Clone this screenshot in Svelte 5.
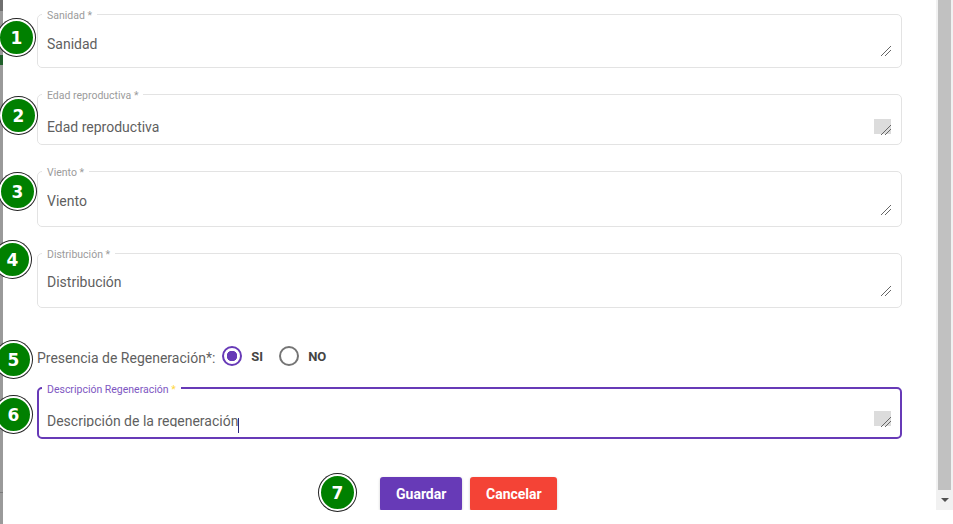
<script>
	// top = space above the textarea, height = textarea height, below = space under it
	const fieldsTop = [
		{ label: "Sanidad", value: "Sanidad", top: 12, height: 22, below: 0 },
		{ label: "Edad reproductiva", value: "Edad reproductiva", top: 15, height: 18, below: -2, corner: true },
		{ label: "Viento", value: "Viento", top: 12, height: 24, below: 0 },
		{ label: "Distribución", value: "Distribución", top: 11, height: 24, below: 0 }
	];

	const steps = [
		{ n: 1, left: -5, top: 19 },
		{ n: 2, left: -3, top: 97 },
		{ n: 3, left: -4, top: 173 },
		{ n: 4, left: -9, top: 241 },
		{ n: 5, left: -8, top: 341 },
		{ n: 6, left: -8, top: 396 },
		{ n: 7, left: 316, top: 474 }
	];

	let presencia = $state("si");
	let descripcion = $state("Descripción de la regeneración");
</script>

<div class="page">
	<div class="strip"></div>

	<main class="form">
		<div class="fields">
			{#each fieldsTop as f}
				<fieldset class="field">
					<legend>{f.label} *</legend>
					<textarea
						class:corner={f.corner}
						style:margin-top="{f.top}px"
						style:margin-bottom="{f.below}px"
						style:height="{f.height}px"
						value={f.value}
					></textarea>
				</fieldset>
			{/each}
		</div>

		<div class="radio-row">
			<span class="radio-title">Presencia de Regeneración*:</span>
			<label class="radio"><input type="radio" name="reg" value="si" bind:group={presencia} /> SI</label>
			<label class="radio"><input type="radio" name="reg" value="no" bind:group={presencia} /> NO</label>
		</div>

		<fieldset class="field active">
			<legend>Descripción Regeneración <span class="req">*</span></legend>
			<textarea class="corner desc" bind:value={descripcion}></textarea>
			<span class="caret"></span>
		</fieldset>

		<div class="actions">
			<button type="button" class="btn save">Guardar</button>
			<button type="button" class="btn cancel">Cancelar</button>
		</div>

		{#each steps as s}
			<span class="step" style:left="{s.left}px" style:top="{s.top}px">{s.n}</span>
		{/each}
	</main>

	<div class="scrollbar">
		<div class="thumb"></div>
		<div class="arrow"></div>
	</div>
</div>

<style>
	:global(body) {
		margin: 0;
		background: #fff;
		overflow: hidden;
	}

	.page {
		display: flex;
		align-items: flex-start;
		height: 524px;
		font-family: Roboto, "Liberation Sans", sans-serif;
		color: #5f5f5f;
	}

	.strip {
		flex: 0 0 3px;
		align-self: stretch;
		background:
			linear-gradient(#6f6f6f, #6f6f6f) no-repeat 0 0 / 3px 11px,
			linear-gradient(#1f5f2a, #1f5f2a) no-repeat 0 55px / 3px 10px,
			linear-gradient(#7a7a7a, #7a7a7a) no-repeat 0 492px / 3px 1px,
			#9a9a9a;
	}

	.form {
		position: relative;
		flex: 1;
		min-width: 0;
		padding: 6px 34px 0;
		box-sizing: border-box;
	}

	.fields {
		display: flex;
		flex-direction: column;
		gap: 18px;
	}

	.field {
		position: relative;
		margin: 0;
		padding: 0 10px 11px 9px;
		border: 1px solid #e3e3e3;
		border-radius: 5px;
		min-width: 0;
	}

	.field legend {
		margin-left: -5px;
		padding: 4px 5px 0;
		font-size: 10.5px;
		line-height: 12px;
		color: #9b9b9b;
	}

	textarea {
		display: block;
		width: 100%;
		padding: 0;
		margin: 0;
		border: 0;
		outline: none;
		background: transparent;
		font-family: inherit;
		font-size: 14px;
		line-height: 20px;
		color: #5f5f5f;
		box-sizing: border-box;
		resize: both;
		overflow: hidden;
	}

	textarea::-webkit-resizer {
		background: linear-gradient(
			135deg,
			transparent 65%,
			#666 65% 69%,
			transparent 69% 78%,
			#666 78% 82%,
			transparent 82%
		);
	}

	textarea.corner {
		background: linear-gradient(#dcdcdc, #dcdcdc) no-repeat right bottom 1px / 17px 15px;
	}

	.radio-row {
		display: flex;
		align-items: center;
		height: 22px;
		margin: 37px 0 13px;
		font-size: 14px;
	}

	.radio-title {
		padding-top: 4px;
		margin-right: 7px;
	}

	.radio {
		display: flex;
		align-items: center;
		gap: 9px;
		margin-right: 16px;
		font-size: 13px;
		font-weight: 700;
		color: #444;
	}

	.radio input {
		appearance: none;
		width: 20px;
		height: 20px;
		margin: 0;
		border: 2px solid #757575;
		border-radius: 50%;
		box-sizing: border-box;
		background: #fff;
	}

	.radio input:checked {
		border-color: #673ab7;
		background: radial-gradient(circle, #673ab7 0 5px, #fff 5.5px);
	}

	.active {
		border: 2px solid #673ab7;
		padding: 0 9px 10px 8px;
	}

	.active legend {
		color: #7e57c2;
	}

	.req {
		color: #ffd740;
	}

	.desc {
		margin-top: 15px;
		height: 16px;
	}

	.caret {
		position: absolute;
		left: 199px;
		top: 22px;
		width: 1px;
		height: 15px;
		background: #2a2a80;
	}

	.actions {
		display: flex;
		gap: 8px;
		height: 33px;
		margin: 38px 0 0 343px;
		clip-path: inset(-4px -4px 0 -4px);
	}

	.btn {
		height: 34px;
		padding: 0 16px;
		border: 0;
		border-radius: 3px;
		font-family: inherit;
		font-size: 14px;
		font-weight: 700;
		color: #fff;
		box-shadow: 0 1px 3px rgba(0, 0, 0, 0.2);
	}

	.save {
		background: #673ab7;
		width: 82px;
	}

	.cancel {
		background: #f44336;
		width: 87px;
	}

	.step {
		position: absolute;
		width: 37px;
		height: 37px;
		display: flex;
		align-items: center;
		justify-content: center;
		box-sizing: border-box;
		border-radius: 50%;
		background: #008000;
		border: 2px solid #fff;
		box-shadow: 0 0 0 1px #222;
		font-family: "DejaVu Sans", sans-serif;
		font-size: 17px;
		font-weight: 700;
		color: #fff;
	}

	.scrollbar {
		flex: 0 0 17px;
		height: 510px;
		display: flex;
		flex-direction: column;
		align-items: center;
		background: #f1f1f1;
	}

	.thumb {
		width: 13px;
		height: 490px;
		background: #c1c1c1;
	}

	.arrow {
		margin-top: 8px;
		width: 0;
		height: 0;
		border-left: 4px solid transparent;
		border-right: 4px solid transparent;
		border-top: 4px solid #505050;
	}
</style>
